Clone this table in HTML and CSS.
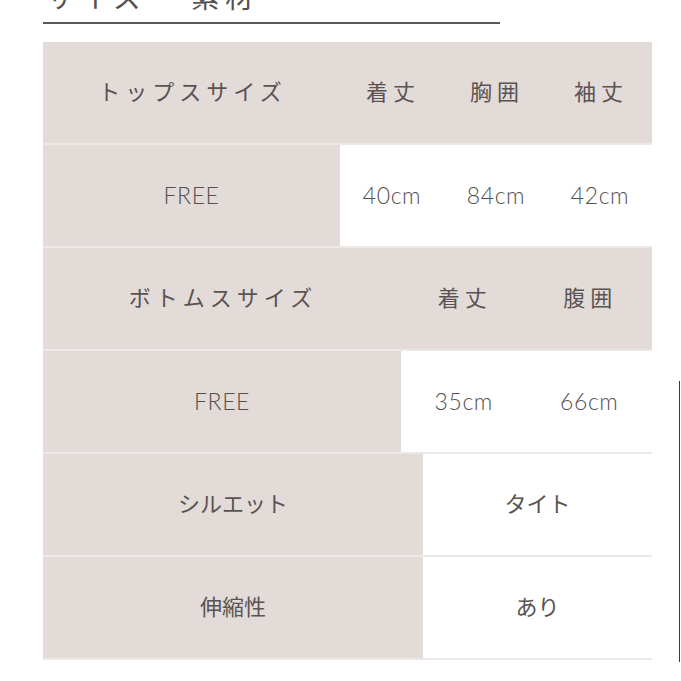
FILE: index.html
```html
<!DOCTYPE html>
<html lang="ja">
<head>
<meta charset="utf-8">
<title>サイズ・素材</title>
<link rel="stylesheet" href="styles.css">
</head>
<body>
<div class="page">
  <header class="heading">
    <h2 class="heading-title"><span>サイズ</span><span>素材</span></h2>
  </header>

  <div class="size-table">
    <div class="row row-top head">
      <div class="cell label spaced">トップスサイズ</div>
      <div class="cell spaced">着丈</div>
      <div class="cell spaced">胸囲</div>
      <div class="cell spaced">袖丈</div>
    </div>
    <div class="row row-top">
      <div class="cell label latin">FREE</div>
      <div class="cell value latin">40cm</div>
      <div class="cell value latin">84cm</div>
      <div class="cell value latin">42cm</div>
    </div>

    <div class="row row-bottom head">
      <div class="cell label spaced">ボトムスサイズ</div>
      <div class="cell spaced">着丈</div>
      <div class="cell spaced">腹囲</div>
    </div>
    <div class="row row-bottom">
      <div class="cell label latin">FREE</div>
      <div class="cell value latin">35cm</div>
      <div class="cell value latin">66cm</div>
    </div>

    <div class="row row-info">
      <div class="cell label">シルエット</div>
      <div class="cell value">タイト</div>
    </div>
    <div class="row row-info">
      <div class="cell label">伸縮性</div>
      <div class="cell value">あり</div>
    </div>
  </div>
</div>
</body>
</html>
```

FILE: styles.css
```css
* {
  box-sizing: border-box;
}

html, body {
  margin: 0;
  padding: 0;
  background: #ffffff;
}

body {
  font-family: "Noto Sans CJK JP", "Noto Sans", sans-serif;
  color: #595353;
  overflow: hidden;
}

.page {
  position: relative;
  width: 681px;
  height: 681px;
  padding: 0 0 0 43px;
}

.page::after {
  content: "";
  position: absolute;
  right: 1px;
  top: 400px;
  bottom: 0;
  width: 1px;
  background: #3a3a3a;
}

.heading {
  width: 457px;
  margin-top: -19px;
  padding-bottom: 11px;
  border-bottom: 2px solid #5c5858;
}

.heading-title {
  margin: 0;
  padding-left: 3px;
  font-size: 28px;
  line-height: 30px;
  font-weight: 400;
  letter-spacing: 6px;
  color: #555050;
  display: flex;
  gap: 44px;
}

.size-table {
  margin-top: 18px;
  width: 609px;
}

.row {
  display: grid;
  height: 103px;
  border-bottom: 2px solid #ece8e6;
  background: #ffffff;
}

.row-top {
  grid-template-columns: 297px 1fr 1fr 1fr;
}

.row-bottom {
  grid-template-columns: 358px 1fr 1fr;
}

.row-info {
  grid-template-columns: 380px 1fr;
}

.row.head {
  background: #e3dbd7;
}

.cell {
  display: flex;
  align-items: center;
  justify-content: center;
  padding-bottom: 5px;
  font-size: 22px;
  font-weight: 400;
  white-space: nowrap;
}

.label {
  background: #e3dbd7;
}

.spaced {
  letter-spacing: 5px;
  padding-left: 2px;
}

.latin {
  font-family: "Lato", "Noto Sans", sans-serif;
  font-size: 23px;
  font-weight: 300;
  letter-spacing: 0.6px;
  padding-bottom: 2px;
  color: #555050;
}
```
